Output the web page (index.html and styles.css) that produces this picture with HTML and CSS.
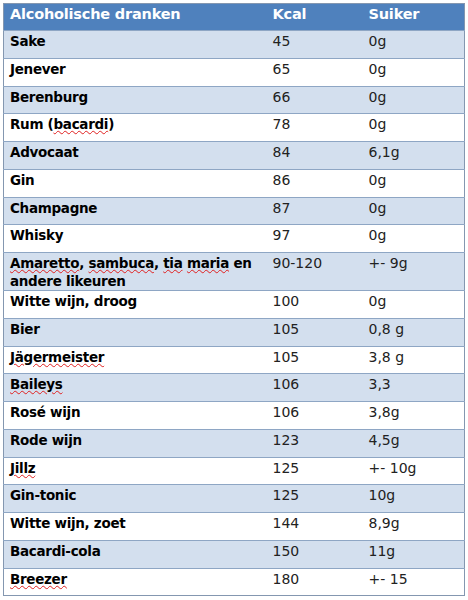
FILE: index.html
```html
<!DOCTYPE html>
<html>
<head>
<meta charset="utf-8">
<link rel="stylesheet" href="styles.css">
</head>
<body>
<table class="kcal">
  <thead>
    <tr><th class="c1">Alcoholische dranken</th><th class="c2">Kcal</th><th class="c3">Suiker</th></tr>
  </thead>
  <tbody>
    <tr class="band"><td>Sake</td><td>45</td><td>0g</td></tr>
    <tr><td>Jenever</td><td>65</td><td>0g</td></tr>
    <tr class="band"><td>Berenburg</td><td>66</td><td>0g</td></tr>
    <tr><td>Rum (<span class="sp">bacardi</span>)</td><td>78</td><td>0g</td></tr>
    <tr class="band"><td>Advocaat</td><td>84</td><td>6,1g</td></tr>
    <tr><td>Gin</td><td>86</td><td>0g</td></tr>
    <tr class="band"><td>Champagne</td><td>87</td><td>0g</td></tr>
    <tr><td>Whisky</td><td>97</td><td>0g</td></tr>
    <tr class="band tall"><td><span class="sp">Amaretto</span>, <span class="sp">sambuca</span>, <span class="sp">tia</span> <span class="sp">maria</span> en andere likeuren</td><td>90-120</td><td>+- 9g</td></tr>
    <tr><td>Witte wijn, droog</td><td>100</td><td>0g</td></tr>
    <tr class="band"><td>Bier</td><td>105</td><td>0,8 g</td></tr>
    <tr><td><span class="sp">Jägermeister</span></td><td>105</td><td>3,8 g</td></tr>
    <tr class="band"><td><span class="sp">Baileys</span></td><td>106</td><td>3,3</td></tr>
    <tr><td>Rosé wijn</td><td>106</td><td>3,8g</td></tr>
    <tr class="band"><td>Rode wijn</td><td>123</td><td>4,5g</td></tr>
    <tr><td><span class="sp">Jillz</span></td><td>125</td><td>+- 10g</td></tr>
    <tr class="band"><td>Gin-tonic</td><td>125</td><td>10g</td></tr>
    <tr><td>Witte wijn, zoet</td><td>144</td><td>8,9g</td></tr>
    <tr class="band"><td>Bacardi-cola</td><td>150</td><td>11g</td></tr>
    <tr><td><span class="sp">Breezer</span></td><td>180</td><td>+- 15</td></tr>
  </tbody>
</table>
</body>
</html>
```
FILE: styles.css
```css
html, body {
  margin: 0;
  padding: 0;
  background: #ffffff;
}
body {
  padding: 3px 0 0 3px;
  font-family: "DejaVu Sans", "Liberation Sans", sans-serif;
}
.kcal {
  border-collapse: collapse;
  width: 462px;
  table-layout: fixed;
  border: 1px solid #8497b0;
}
.kcal th {
  background: #4f81bd;
  color: #ffffff;
  font-weight: bold;
  font-size: 14.5px;
  letter-spacing: -0.2px;
  text-align: left;
  height: 27px;
  padding: 0 6px;
  vertical-align: top;
  line-height: 20px;
  box-sizing: border-box;
}
.kcal th.c1 { width: 263px; }
.kcal th.c2 { width: 96px; }
.kcal td {
  font-size: 14px;
  color: #222222;
  height: 27.75px;
  box-sizing: border-box;
  padding: 2px 6px 0 6px;
  vertical-align: top;
  line-height: 17px;
  border-top: 1px solid #8ea6c4;
}
.kcal td:first-child {
  font-weight: bold;
  font-size: 13.5px;
  letter-spacing: -0.3px;
  color: #000000;
}
.band td {
  background: #d3dfee;
}
.tall td {
  height: 37px;
  line-height: 18px;
  padding-top: 1px;
}
.sp {
  text-decoration: underline wavy #e02020;
  text-decoration-thickness: 1px;
  text-underline-offset: 1px;
}
```
